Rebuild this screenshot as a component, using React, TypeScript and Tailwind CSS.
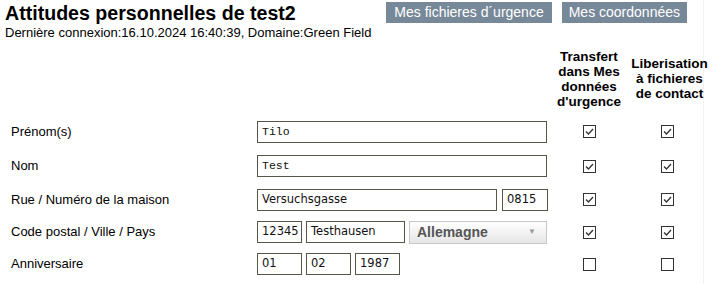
import React from 'react';

function Check(props: { checked: boolean }) {
  return (
    <div className="flex h-[13px] w-[13px] items-center justify-center border border-[#333] bg-white">
      {props.checked && (
        <svg width="11" height="11" viewBox="0 0 11 11">
          <path d="M2 5.5 L4.5 8 L9 3" fill="none" stroke="#333" strokeWidth="1.3" />
        </svg>
      )}
    </div>
  );
}

function TextBox(props: { value: string; width: string; mono?: boolean }) {
  const { value, width, mono } = props;
  return (
    <div
      className={`${width} flex h-[22px] items-center border border-[#555548] bg-white px-[4px] ${
        mono ? "font-['Liberation_Mono',monospace] text-[11.5px]" : "font-['DejaVu_Sans',sans-serif] text-[11.5px]"
      } text-[#111]`}
    >
      {value}
    </div>
  );
}

const rows: { label: string; h: string; fields: React.ReactNode; c1: boolean; c2: boolean }[] = [
  { label: 'Prénom(s)', h: 'h-[35px]', fields: <TextBox value="Tilo" width="w-[291px]" mono />, c1: true, c2: true },
  { label: 'Nom', h: 'h-[34px]', fields: <TextBox value="Test" width="w-[291px]" mono />, c1: true, c2: true },
  {
    label: 'Rue / Numéro de la maison',
    h: 'h-[33px]',
    fields: (
      <div className="flex gap-[5px]">
        <TextBox value="Versuchsgasse" width="w-[240px]" />
        <TextBox value="0815" width="w-[46px]" />
      </div>
    ),
    c1: true,
    c2: true,
  },
  {
    label: 'Code postal / Ville / Pays',
    h: 'h-[32px]',
    fields: (
      <div className="flex items-center gap-[4px]">
        <TextBox value="12345" width="w-[45px]" />
        <TextBox value="Testhausen" width="w-[99px]" />
        <div className="flex h-[23px] w-[138px] items-center justify-between border border-[#c8c8c8] bg-gradient-to-b from-[#ffffff] to-[#e6e6e6] pl-[7px] pr-[10px]">
          <span className="font-['Liberation_Sans',sans-serif] text-[14px] font-bold text-[#555]">Allemagne</span>
          <span className="text-[8px] text-[#999]">▼</span>
        </div>
      </div>
    ),
    c1: true,
    c2: true,
  },
  {
    label: 'Anniversaire',
    h: 'h-[32px]',
    fields: (
      <div className="flex gap-[4px]">
        <TextBox value="01" width="w-[45px]" />
        <TextBox value="02" width="w-[45px]" />
        <TextBox value="1987" width="w-[45px]" />
      </div>
    ),
    c1: false,
    c2: false,
  },
];

export default function App() {
  return (
    <div className="h-[284px] w-[716px] bg-white font-['Liberation_Sans',Arial,sans-serif] text-black">
      <div className="h-full w-[704px] border-r border-[#f2f2f2]">
        <div className="flex h-[40px] items-start justify-between">
          <div className="pl-[5px] pt-[2px]">
            <h1 className="text-[19.6px] font-bold leading-[23px]">Attitudes personnelles de test2</h1>
            <p className="mt-[1px] text-[13px] leading-[14px]">Dernière connexion:16.10.2024 16:40:39, Domaine:Green Field</p>
          </div>
          <div className="mr-[16px] mt-[2px] flex gap-[10px]">
            <div className="flex h-[21px] items-center bg-[#778899] px-[8px] text-[14px] text-white">Mes fichieres d´urgence</div>
            <div className="flex h-[21px] items-center bg-[#778899] px-[7px] text-[14px] text-white">Mes coordonnées</div>
          </div>
        </div>
        <div className="grid grid-cols-[257px_290px_84px_73px]">
          <div className="col-span-2" />
          <div className="flex h-[74px] items-center justify-center pt-[3px] text-center text-[13.5px] font-bold leading-[15px]">
            Transfert
            <br />
            dans Mes
            <br />
            données
            <br />
            d'urgence
          </div>
          <div className="-mr-[4px] flex h-[74px] items-center justify-center pt-[3px] text-center text-[13.5px] font-bold leading-[15px]">
            Liberisation
            <br />à fichieres
            <br />
            de contact
          </div>
          {rows.map((r) => (
            <React.Fragment key={r.label}>
              <div className={`${r.h} flex items-center pl-[11px] text-[13px]`}>{r.label}</div>
              <div className={`${r.h} flex items-center`}>{r.fields}</div>
              <div className={`${r.h} flex items-center justify-center pl-[1px]`}>
                <Check checked={r.c1} />
              </div>
              <div className={`${r.h} flex items-center justify-center`}>
                <Check checked={r.c2} />
              </div>
            </React.Fragment>
          ))}
        </div>
      </div>
    </div>
  );
}
